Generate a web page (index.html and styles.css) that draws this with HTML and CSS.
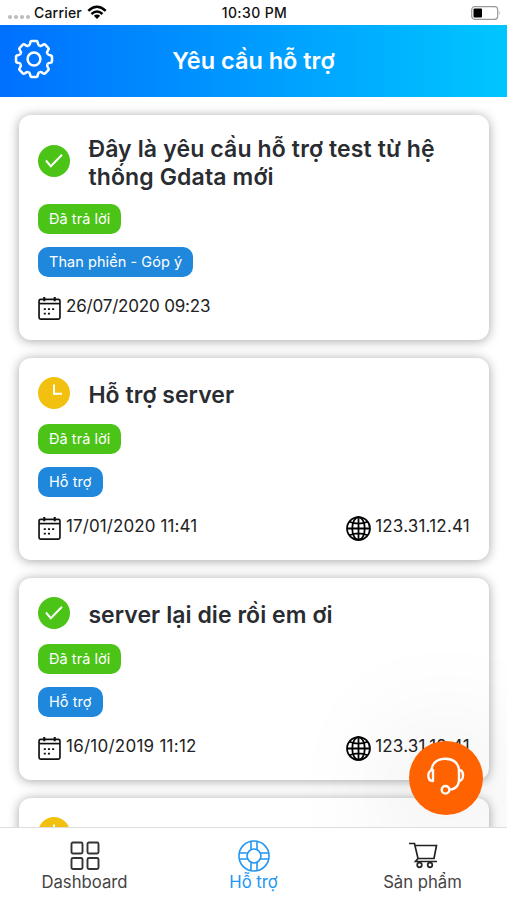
FILE: index.html
```
<!DOCTYPE html>
<html lang="vi">
<head>
<meta charset="utf-8">
<title>Yêu cầu hỗ trợ</title>
<link rel="stylesheet" href="styles.css">
</head>
<body>
<svg class="defs" width="0" height="0" aria-hidden="true">
  <symbol id="check" viewBox="0 0 32 32"><circle cx="16" cy="16" r="16" fill="#4cc417"/><path d="M8 15.500l4.800 5.800L24 9.800" fill="none" stroke="#fff" stroke-width="2"/></symbol>
  <symbol id="clock" viewBox="0 0 32 32"><circle cx="16" cy="16" r="16" fill="#f2c10f"/><path d="M16 7.500V16.800h8" fill="none" stroke="#fff" stroke-width="2"/></symbol>
  <symbol id="calendar" viewBox="0 0 22 22"><g fill="none" stroke="#111" stroke-width="1.600"><rect x="1" y="2.200" width="20" height="19" rx="1.500"/><path d="M1 6.300h20"/><path d="M6 0v4M16 0v4" stroke-width="2"/></g><path d="M9.500 11.700h2M13.500 11.700h2M5.500 11.700h2M5.500 16h2M9.500 16h2" stroke="#111" stroke-width="1.700"/></symbol>
  <symbol id="globe" viewBox="0 0 24 24"><g fill="none" stroke="#000" stroke-width="1.700"><circle cx="12" cy="12" r="11"/><ellipse cx="12" cy="12" rx="6" ry="11"/><path d="M12 1v22M1 12h22M3.200 5.500Q12 9 20.800 5.500M3.200 18.500Q12 15 20.800 18.500"/></g></symbol>
  <symbol id="tooth" viewBox="-20 -20 40 40"><path d="M-5.470-13.210Q-4-14-3.800-16Q-3.500-18-2.200-18H2.200Q3.500-18 3.800-16Q4-14 5.470-13.210" fill="none" stroke="#fff" stroke-width="2.500"/></symbol>
</svg>
<div class="screen">
  <div class="status">
    <div class="carrier"><span class="dots"><i></i><i></i><i></i><i></i></span><span class="carrier-name">Carrier</span>
      <svg width="20" height="15" viewBox="0 0 20 15"><g fill="none" stroke="#000" stroke-width="2.500"><path d="M1.300 5.800Q10-2.300 18.700 5.800M4.500 9Q10 3.900 15.500 9"/></g><path d="M10 14l-3.200-3.300Q10 8.200 13.200 10.700z"/></svg>
    </div>
    <span class="time">10:30 PM</span>
    <svg class="battery" width="30" height="14" viewBox="0 0 30 14"><rect x=".7" y=".7" width="26" height="12.600" rx="3" fill="#fff" stroke="#999" stroke-width="1.200"/><rect x="2.500" y="2.500" width="8.500" height="9" rx="1"/><path d="M28.500 5v4q1.500-2 0-4z" fill="#999"/></svg>
  </div>
  <header class="header">
    <svg class="gear" width="40" height="40" viewBox="-20 -20 40 40"><circle r="6.400" fill="none" stroke="#fff" stroke-width="2.500"/>
      <g><use href="#tooth" x="-20" y="-20" width="40" height="40"/></g>
      <g transform="rotate(45)"><use href="#tooth" x="-20" y="-20" width="40" height="40"/></g>
      <g transform="rotate(90)"><use href="#tooth" x="-20" y="-20" width="40" height="40"/></g>
      <g transform="rotate(135)"><use href="#tooth" x="-20" y="-20" width="40" height="40"/></g>
      <g transform="rotate(180)"><use href="#tooth" x="-20" y="-20" width="40" height="40"/></g>
      <g transform="rotate(225)"><use href="#tooth" x="-20" y="-20" width="40" height="40"/></g>
      <g transform="rotate(270)"><use href="#tooth" x="-20" y="-20" width="40" height="40"/></g>
      <g transform="rotate(315)"><use href="#tooth" x="-20" y="-20" width="40" height="40"/></g>
    </svg>
    <h1>Yêu cầu hỗ trợ</h1>
  </header>
  <main class="list">
    <article class="card">
      <div class="head"><svg class="state"><use href="#check"/></svg><h2>Đây là yêu cầu hỗ trợ test từ hệ<br>thống Gdata mới</h2></div>
      <span class="tag green">Đã trả lời</span>
      <span class="tag blue">Than phiền - Góp ý</span>
      <div class="meta"><svg class="cal"><use href="#calendar"/></svg><span class="date first">26/07/2020 09:23</span></div>
    </article>
    <article class="card">
      <div class="head"><svg class="state"><use href="#clock"/></svg><h2>Hỗ trợ server</h2></div>
      <span class="tag green">Đã trả lời</span>
      <span class="tag blue">Hỗ trợ</span>
      <div class="meta"><svg class="cal"><use href="#calendar"/></svg><span class="date">17/01/2020 11:41</span><svg class="globe"><use href="#globe"/></svg><span class="ip">123.31.12.41</span></div>
    </article>
    <article class="card">
      <div class="head"><svg class="state"><use href="#check"/></svg><h2>server lại die rồi em ơi</h2></div>
      <span class="tag green">Đã trả lời</span>
      <span class="tag blue">Hỗ trợ</span>
      <div class="meta"><svg class="cal"><use href="#calendar"/></svg><span class="date late">16/10/2019 11:12</span><svg class="globe"><use href="#globe"/></svg><span class="ip">123.31.12.41</span></div>
    </article>
    <article class="card">
      <div class="head"><svg class="state"><use href="#clock"/></svg><h2 class="peek">Server lag</h2></div>
    </article>
  </main>
  <div class="support"><svg width="40" height="40" viewBox="0 0 40 40"><g fill="none" stroke="#fff" stroke-width="2.400" stroke-linecap="round" stroke-linejoin="round"><path d="M5.500 11.500C6.500 4.500 12 .8 19.500 .8S32.500 5 33 12v11c-.8 5.500-4 8.600-9.500 8.600"/><path d="M7 12v11C3.800 23 2.300 20.500 2.300 17.500S4 12 7 12zM33 12c2.600 0 4 2.400 4 5.500S35.500 23 33 23"/><circle cx="19.500" cy="31.800" r="3.800"/></g></svg></div>
  <nav class="tabs">
    <div class="tab"><svg width="30" height="30" viewBox="0 0 30 30"><g fill="none" stroke="#333" stroke-width="1.900"><rect x="1.500" y="1.500" width="11" height="11" rx="1.500"/><rect x="17.500" y="1.500" width="11" height="11" rx="1.500"/><rect x="1.500" y="17" width="11" height="11" rx="1.500"/><rect x="17.500" y="17" width="11" height="11" rx="1.500"/></g></svg><span class="t1">Dashboard</span></div>
    <div class="tab active"><svg width="34" height="34" viewBox="0 0 34 34"><g fill="none" stroke="#2196f3" stroke-width="1.700"><circle cx="17" cy="17" r="16"/><circle cx="17" cy="17" r="7.400"/><path d="M13.800 1.500v9M20.200 1.500v9M13.800 23.500v9M20.200 23.500v9M1.500 13.800h9M1.500 20.200h9M23.500 13.800h9M23.500 20.200h9"/></g></svg><span class="t2">Hỗ trợ</span></div>
    <div class="tab"><svg width="30" height="30" viewBox="0 0 30 30"><g fill="none" stroke="#222" stroke-width="1.700"><path d="M1 2.500h5.500L10 17.500h16L28.500 4.500H7M10 17.500l-2.500 3H29"/><circle cx="11.500" cy="24" r="2.300"/><circle cx="22" cy="24" r="2.300"/></g></svg><span class="t3">Sản phẩm</span></div>
  </nav>
</div>
</body>
</html>
```
FILE: styles.css
```
* { box-sizing: border-box; }
body { margin: 0; background: #fff; font-family: Inter, "Liberation Sans", sans-serif; color: #222; }
.defs { position: absolute; }
svg { display: block; flex: none; overflow: visible; }
h1, h2 { margin: 0; font-weight: 600; white-space: nowrap; }
.screen { position: relative; width: 507px; height: 900px; overflow: hidden; display: flex; flex-direction: column; }
.status { height: 25px; flex: none; display: grid; grid-template-columns: 1fr auto 1fr; align-items: center; padding: 0 6px 0 8px; font-size: 14px; font-weight: 500; color: #111; }
.carrier { display: flex; align-items: center; }
.carrier-name { letter-spacing: .2px; }
.time { letter-spacing: .4px; }
.dots { display: flex; gap: 2px; margin: 8px 4px 0 0; }
.dots i { width: 4px; height: 4px; border-radius: 50%; background: #bbb; }
.carrier svg { margin-left: 5px; }
.battery { justify-self: end; }
.header { height: 72px; flex: none; display: grid; grid-template-columns: 40px 1fr 40px; align-items: center; padding: 0 14px; background: linear-gradient(90deg, #0070ff, #00c6ff); color: #fff; }
.gear { margin-top: -4px; }
h1 { font-size: 23.500px; line-height: 30px; text-align: center; }
.list { flex: 1; min-height: 0; overflow: hidden; padding: 18.400px 18px 0 19px; display: flex; flex-direction: column; gap: 18px; }
.card { flex: none; padding: 19px; height: 202px; border-radius: 12px; background: #fff; box-shadow: 0 1px 11px rgba(0,0,0,.36); display: flex; flex-direction: column; align-items: flex-start; }
.card:first-child { height: 225px; }
.head { display: flex; align-items: center; gap: 18.400px; min-height: 32px; margin-bottom: 15px; }
.card:first-child .head { height: 54px; margin-bottom: 16px; }
.card:first-child h2 { padding-top: 4px; letter-spacing: .14px; }
.state { width: 32px; height: 32px; }
h2 { font-size: 23px; line-height: 28px; padding-top: 3px; letter-spacing: .06px; color: #292c30; }
h2.peek { padding-top: 4px; margin-bottom: -1px; }
.tag { height: 30px; margin-bottom: 13px; padding: 0 11px; border-radius: 10px; color: #fff; font-size: 14.500px; letter-spacing: .06px; line-height: 30px; white-space: nowrap; }
.green { background: #4cc417; }
.blue { background: #2088dc; }
.meta { width: 100%; display: flex; align-items: center; height: 24px; margin-top: 5px; font-size: 17px; line-height: 22px; color: #222; white-space: nowrap; }
.date, .ip { padding-bottom: 2px; }
.date { letter-spacing: .1px; }
.date.first { letter-spacing: -.18px; }
.date.late { letter-spacing: .25px; }
.ip { letter-spacing: .2px; }
.cal { width: 23px; height: 23px; margin-top: 3px; margin-right: 5px; }
.globe { width: 25px; height: 25px; margin-left: auto; margin-right: 4px; margin-top: 2px; }
.support { position: absolute; left: 409px; top: 741px; width: 74px; height: 74px; border-radius: 50%; background: #ff6200; display: flex; align-items: center; justify-content: center; box-shadow: 0 10px 120px 10px rgba(0,0,0,.13); }
.tabs { position: relative; height: 73px; flex: none; display: grid; grid-template-columns: repeat(3, 1fr); background: #fff; border-top: 1px solid #ddd; }
.tab { display: flex; flex-direction: column; align-items: center; padding-top: 12px; font-size: 16.700px; line-height: 20px; color: #444; }
.tab svg { height: 32px; }
.tab.active { color: #2196f3; }
```
